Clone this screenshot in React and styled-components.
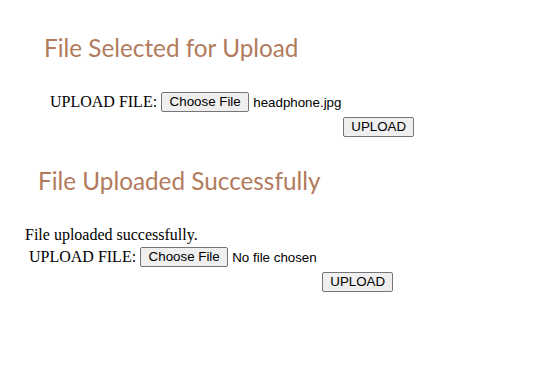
import React from "react";
import styled, { createGlobalStyle } from "styled-components";

const Global = createGlobalStyle`
  html, body { margin: 0; padding: 0; background: #ffffff; }
  body { font-family: "Liberation Serif", "Times New Roman", serif; font-size: 16px; color: #000; }
`;

const Page = styled.div`
  width: 544px;
  height: 374px;
  display: flex;
  flex-direction: column;
  align-items: flex-start;
`;

const Heading = styled.h2`
  margin: 0;
  margin-top: ${(p) => p.$top}px;
  margin-left: ${(p) => p.$left}px;
  font-family: Lato, "Open Sans", sans-serif;
  font-weight: 400;
  font-size: 24.3px;
  line-height: 28px;
  color: #b27b5d;
`;

const Message = styled.p`
  margin: ${(p) => p.$top}px 0 0 ${(p) => p.$left}px;
  font-size: 16px;
  line-height: 18px;
`;

const Form = styled.form`
  margin: ${(p) => p.$top}px 0 0 ${(p) => p.$left}px;
  display: grid;
  grid-template-columns: auto 252px;
  column-gap: 4px;
  row-gap: 5px;
  align-items: center;
`;

const Label = styled.span`
  font-size: 16px;
  line-height: 20px;
  white-space: nowrap;
`;

const FileInput = styled.div`
  display: flex;
  align-items: center;
  gap: 4px;
  font-family: "Liberation Sans", Arial, sans-serif;
  font-size: 13.33px;
  color: #000;
`;

const NativeButton = styled.button`
  height: 20px;
  box-sizing: border-box;
  padding: 1px ${(p) => p.$pad || 7.5}px;
  border: 1px solid #767676;
  border-radius: 2px;
  background: #efefef;
  font-family: "Liberation Sans", Arial, sans-serif;
  font-size: 13.33px;
  color: #000;
  line-height: 16px;
`;

const SubmitButton = styled(NativeButton)`
  grid-column: 2;
  justify-self: end;
  margin-right: -1px;
`;

const FileName = styled.span`
  white-space: nowrap;
`;

function UploadForm({ top, left, fileName }) {
  return (
    <Form $top={top} $left={left} onSubmit={(e) => e.preventDefault()}>
      <Label>UPLOAD FILE:</Label>
      <FileInput>
        <NativeButton type="button">Choose File</NativeButton>
        <FileName>{fileName}</FileName>
      </FileInput>
      <SubmitButton type="submit" $pad={7}>UPLOAD</SubmitButton>
    </Form>
  );
}

export default function App() {
  return (
    <>
      <Global />
      <Page>
        <Heading $top={34} $left={44}>File Selected for Upload</Heading>
        <UploadForm top={30} left={50} fileName="headphone.jpg" />
        <Heading $top={30} $left={38}>File Uploaded Successfully</Heading>
        <Message $top={31} $left={25}>File uploaded successfully.</Message>
        <UploadForm top={3} left={29} fileName="No file chosen" />
      </Page>
    </>
  );
}
